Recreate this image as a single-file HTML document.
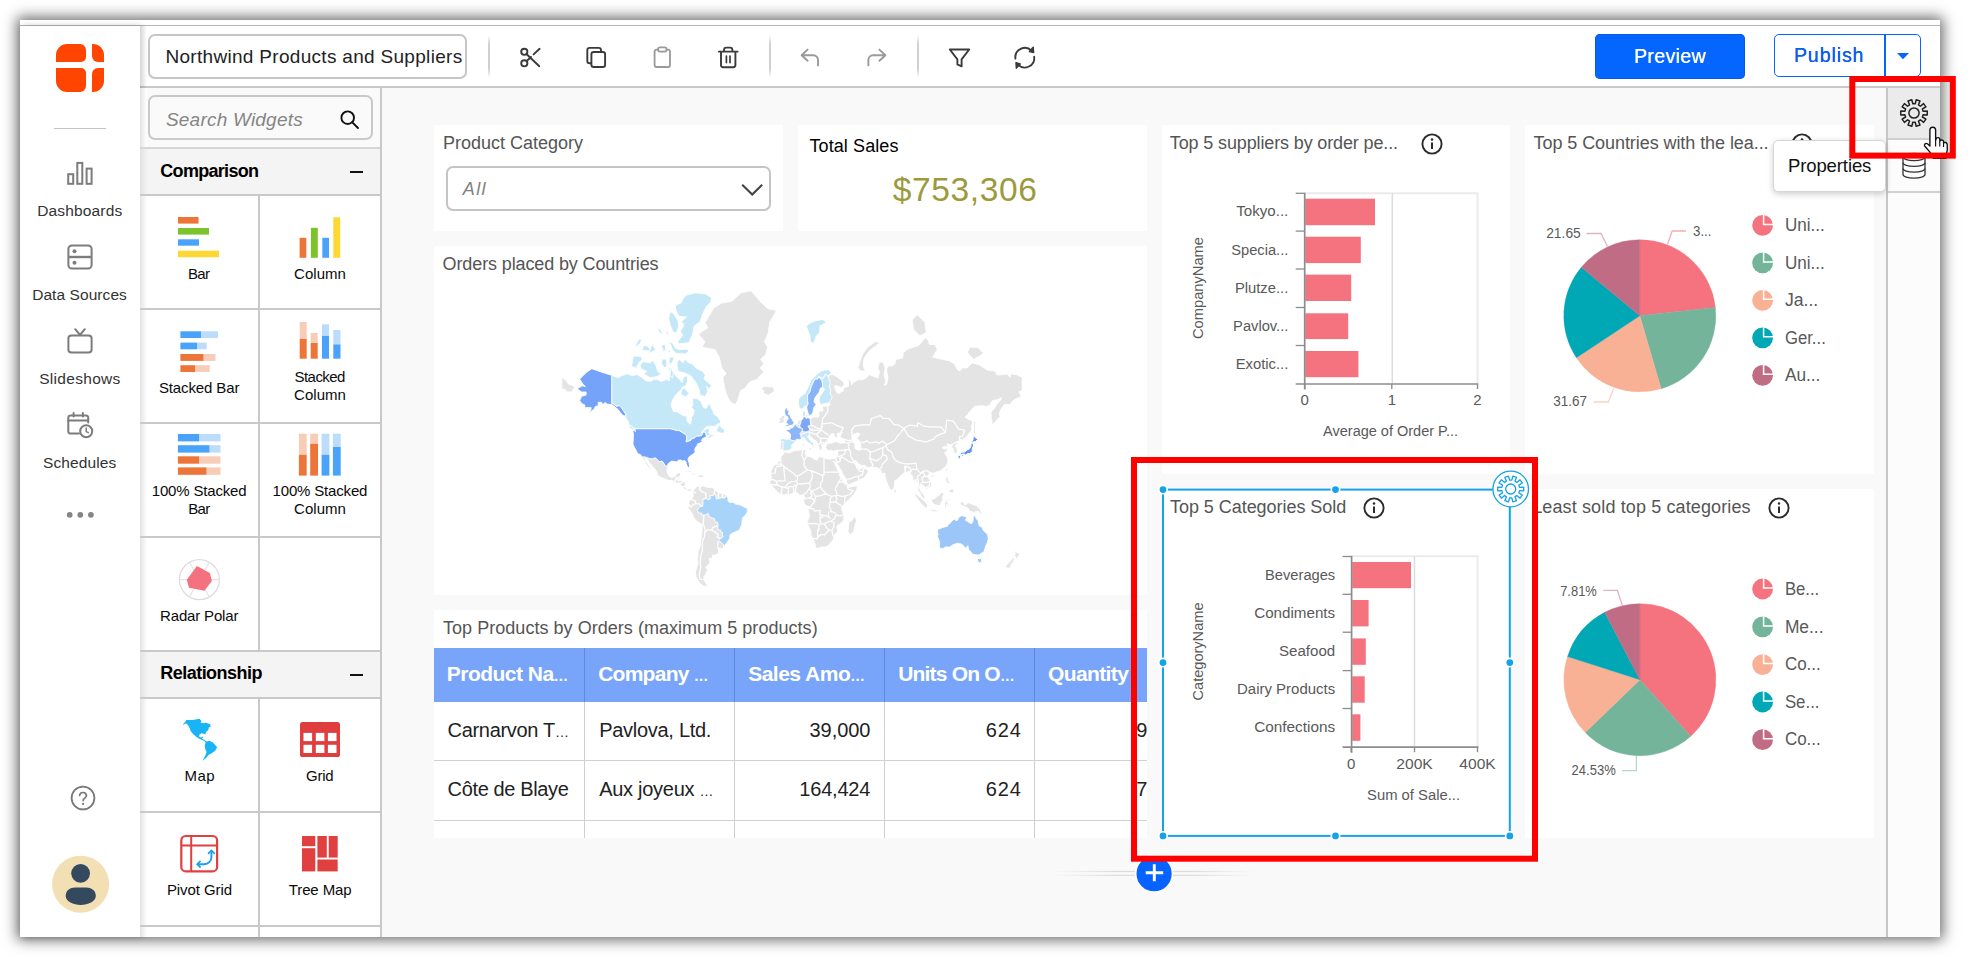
<!DOCTYPE html>
<html lang="en"><head><meta charset="utf-8"><title>Northwind Products and Suppliers - Dashboard Designer</title>
<style>
html,body{margin:0;padding:0;}
body{width:1970px;height:957px;overflow:hidden;background:#fff;position:relative;font-family:"Liberation Sans",Arial,sans-serif;}
.a{position:absolute;}
.t{position:absolute;white-space:nowrap;}
#win{left:20px;top:20px;width:1920px;height:917px;background:#f9f9f9;box-shadow:0 0 13px 3px rgba(0,0,0,.58);}
.w{background:#fff;}
.line{background:#c9c9c9;}
svg{position:absolute;overflow:visible;}
</style></head><body>
<!-- chrome -->
<div class="a" id="win"></div>
<div class="a" style="left:20px;top:20px;width:1920px;height:5px;background:#fff"></div>
<div class="a" style="left:20px;top:25px;width:1920px;height:1px;background:#b5b5b5"></div>
<div class="a" id="sidebar" style="left:20px;top:26px;width:120px;height:911px;background:#fff;box-shadow:2px 0 6px rgba(0,0,0,.22)"></div>
<div class="a" id="toolbar" style="left:140px;top:26px;width:1800px;height:60px;background:#fff"></div>
<div class="a line" style="left:140px;top:86px;width:1800px;height:2px;background:#c9c9c9"></div>
<div class="a" style="left:140px;top:26px;width:7px;height:911px;background:linear-gradient(90deg,rgba(0,0,0,.16),rgba(0,0,0,0))"></div>
<svg style="left:56px;top:44px" width="48" height="48" viewBox="0 0 48 48"><g fill="#ff4500"><path d="M11 0H24A6 6 0 0 1 30 6V13A5 5 0 0 1 25 18H0V11A11 11 0 0 1 11 0Z"/><path d="M36 0H37A11 11 0 0 1 48 11V18H42A6 6 0 0 1 36 12Z"/><path d="M0 24H25A5 5 0 0 1 30 29V42A6 6 0 0 1 24 48H11A11 11 0 0 1 0 37Z"/><path d="M42 24H48V37A11 11 0 0 1 37 48H36V30A6 6 0 0 1 42 24Z"/></g></svg>
<div class="a" style="left:54px;top:128px;width:52px;height:1px;background:#c4c4c4"></div>
<svg style="left:67px;top:162px" width="26" height="23" viewBox="0 0 26 23" fill="none" stroke="#7c7c7c" stroke-width="2"><rect x="1.2" y="12.2" width="5" height="9.6"/><rect x="10.3" y="0.9" width="5" height="20.9"/><rect x="19.6" y="6.6" width="5" height="15.2"/></svg>
<span class="t" style="font-size:15.5px;line-height:17px;top:202px;color:#333;letter-spacing:0.146px;left:37.25px;">Dashboards</span>
<svg style="left:67px;top:244px" width="26" height="26" viewBox="0 0 26 26" fill="none" stroke="#7c7c7c" stroke-width="2"><rect x="1.4" y="1.4" width="23.2" height="23.2" rx="3.5"/><path d="M1.4 13H24.6" stroke-width="2.4"/><circle cx="7.5" cy="7.2" r="2" fill="#7c7c7c" stroke="none"/><circle cx="7.5" cy="18.8" r="2" fill="#7c7c7c" stroke="none"/></svg>
<span class="t" style="font-size:15.5px;line-height:17px;top:286px;color:#333;letter-spacing:0.070px;left:32.15px;">Data Sources</span>
<svg style="left:67px;top:328px" width="26" height="26" viewBox="0 0 26 26" fill="none" stroke="#7c7c7c" stroke-width="2" stroke-linecap="round"><rect x="1.4" y="7.4" width="23.2" height="17.2" rx="3"/><path d="M8.2 1.2L13 7L17.8 1.2"/></svg>
<span class="t" style="font-size:15.5px;line-height:17px;top:370px;color:#333;letter-spacing:0.310px;left:39.15px;">Slideshows</span>
<svg style="left:67px;top:412px" width="27" height="27" viewBox="0 0 27 27" fill="none" stroke="#7c7c7c" stroke-width="2" stroke-linecap="round"><path d="M12 21.6H3.5A2.2 2.2 0 0 1 1.3 19.4V5.6A2.2 2.2 0 0 1 3.5 3.4H19A2.2 2.2 0 0 1 21.2 5.6V10.5"/><path d="M1.3 8.6H21.2M6.6 0.9V4.6M15.9 0.9V4.6"/><circle cx="19.2" cy="19.2" r="6"/><path d="M19.2 16V19.6L21.3 20.6" stroke-width="1.5"/></svg>
<span class="t" style="font-size:15.5px;line-height:17px;top:454px;color:#333;letter-spacing:0.126px;left:42.95px;">Schedules</span>
<svg style="left:66px;top:511px" width="30" height="8"><g fill="#858585"><circle cx="3.7" cy="3.8" r="2.9"/><circle cx="14.3" cy="3.8" r="2.9"/><circle cx="24.9" cy="3.8" r="2.9"/></g></svg>
<svg style="left:70px;top:785px" width="26" height="26" viewBox="0 0 26 26" fill="none" stroke="#787878" stroke-width="1.8" stroke-linecap="round"><circle cx="13" cy="13" r="11.4"/><path d="M9.6 10.3A3.5 3.5 0 0 1 16.5 10.6C16.5 13 13.1 13.2 13.1 15.6" stroke-width="1.7"/><circle cx="13.1" cy="18.9" r="1.1" fill="#787878" stroke="none"/></svg>
<svg style="left:52px;top:855px" width="58" height="58" viewBox="0 0 58 58"><circle cx="28.6" cy="29.2" r="28.5" fill="#f2dfb4"/><circle cx="28.6" cy="18.3" r="9.4" fill="#34495e"/><path d="M13.7 41C13.7 35.5 18 32.6 23 32.6H34.2C39.2 32.6 43.8 35.5 43.8 41C43.8 46.5 36 49.9 28.7 49.9C21.4 49.9 13.7 46.5 13.7 41Z" fill="#34495e"/></svg>
<div class="a" style="left:148px;top:34px;width:315px;height:41px;border:2px solid #c6c6c6;border-radius:7px;background:#fff;box-sizing:content-box"></div>
<span class="t" style="font-size:19px;line-height:21px;top:46px;color:#222;letter-spacing:0.305px;left:165.46px;">Northwind Products and Suppliers</span>
<div class="a" style="left:488px;top:35px;width:2px;height:43px;background:linear-gradient(180deg,rgba(200,200,200,0),rgba(200,200,200,.85) 22%,rgba(200,200,200,.85) 78%,rgba(200,200,200,0))"></div>
<div class="a" style="left:769px;top:35px;width:2px;height:43px;background:linear-gradient(180deg,rgba(200,200,200,0),rgba(200,200,200,.85) 22%,rgba(200,200,200,.85) 78%,rgba(200,200,200,0))"></div>
<div class="a" style="left:917px;top:35px;width:2px;height:43px;background:linear-gradient(180deg,rgba(200,200,200,0),rgba(200,200,200,.85) 22%,rgba(200,200,200,.85) 78%,rgba(200,200,200,0))"></div>
<div class="a" style="left:1595px;top:34px;width:150px;height:45px;background:#0565ff;border-radius:5px;box-shadow:0 0 0 .5px #0450cc inset"></div>
<span class="t" style="font-size:19.5px;line-height:22px;top:45px;color:#fff;letter-spacing:0.399px;left:1633.93px;text-shadow:0 0 .6px #fff;">Preview</span>
<div class="a" style="left:1774px;top:34px;width:145px;height:41px;border:1.5px solid #0565ff;border-radius:5px;background:#fff;box-sizing:content-box"></div>
<div class="a" style="left:1884px;top:35px;width:1.5px;height:42px;background:#0565ff"></div>
<span class="t" style="font-size:19.5px;line-height:22px;top:44px;color:#0b5cf0;letter-spacing:0.931px;left:1793.93px;text-shadow:0 0 .5px #0b5cf0;">Publish</span>
<svg style="left:1896px;top:52px" width="14" height="8"><path d="M1 1H13L7 7.2Z" fill="#0565ff"/></svg>
<!-- panel -->
<div class="a" id="wpanel" style="left:147px;top:88px;width:234px;height:849px;background:#fff"></div>
<div class="a" style="left:147px;top:88px;width:234px;height:60px;background:#fafafa"></div>
<div class="a" style="left:140px;top:88px;width:7px;height:849px;background:linear-gradient(90deg,#e4e4e4,#fff)"></div>
<div class="a line" style="left:380px;top:88px;width:2px;height:849px"></div>
<div class="a" style="left:148px;top:95px;width:221px;height:41px;border:2px solid #c9c9c9;border-radius:7px;background:#fafafa;box-sizing:content-box"></div>
<span class="t" style="font-size:19px;line-height:21px;top:109px;color:#858585;font-style:italic;letter-spacing:0.212px;left:165.96px;">Search Widgets</span>
<svg style="left:340px;top:110px" width="20" height="20" viewBox="0 0 20 20" fill="none" stroke="#111" stroke-width="1.9" stroke-linecap="round"><circle cx="7.7" cy="7.7" r="6.3"/><path d="M12.3 12.3L18 18"/></svg>
<div class="a" style="left:140px;top:148px;width:240px;height:46px;background:linear-gradient(90deg,#e2e2e2,#f4f4f4 8px)"></div>
<div class="a line" style="left:140px;top:147px;width:240px;height:1.5px;background:#d6d6d6"></div>
<span class="t" style="font-size:18px;line-height:20px;top:161px;color:#000;font-weight:700;letter-spacing:-0.700px;left:160.31px;">Comparison</span>
<div class="a" style="left:350px;top:171.3px;width:13px;height:2px;background:#111"></div>
<div class="a" style="left:140px;top:651px;width:240px;height:46px;background:linear-gradient(90deg,#e2e2e2,#f4f4f4 8px)"></div>
<div class="a line" style="left:140px;top:650px;width:240px;height:1.5px;background:#d6d6d6"></div>
<span class="t" style="font-size:18px;line-height:20px;top:663px;color:#000;font-weight:700;letter-spacing:-0.536px;left:160.31px;">Relationship</span>
<div class="a" style="left:350px;top:674.3px;width:13px;height:2px;background:#111"></div>
<div class="a line" style="left:140px;top:194px;width:241px;height:2px"></div>
<div class="a line" style="left:140px;top:308px;width:241px;height:2px"></div>
<div class="a line" style="left:140px;top:422px;width:241px;height:2px"></div>
<div class="a line" style="left:140px;top:536px;width:241px;height:2px"></div>
<div class="a line" style="left:140px;top:650px;width:241px;height:2px"></div>
<div class="a line" style="left:140px;top:697px;width:241px;height:2px"></div>
<div class="a line" style="left:140px;top:811px;width:241px;height:2px"></div>
<div class="a line" style="left:140px;top:925px;width:241px;height:2px"></div>
<div class="a line" style="left:258px;top:194px;width:2px;height:457px"></div>
<div class="a line" style="left:258px;top:697px;width:2px;height:240px"></div>
<span class="t" style="font-size:15px;line-height:17px;top:265px;color:#0a0a0a;letter-spacing:-0.700px;left:188.03px;">Bar</span>
<span class="t" style="font-size:15px;line-height:17px;top:265px;color:#0a0a0a;letter-spacing:0.033px;left:294.07px;">Column</span>
<span class="t" style="font-size:15px;line-height:17px;top:379px;color:#0a0a0a;letter-spacing:-0.117px;left:158.92px;">Stacked Bar</span>
<span class="t" style="font-size:15px;line-height:17px;top:368px;color:#0a0a0a;letter-spacing:-0.542px;left:294.52px;">Stacked</span>
<span class="t" style="font-size:15px;line-height:17px;top:386px;color:#0a0a0a;letter-spacing:0.033px;left:294.07px;">Column</span>
<span class="t" style="font-size:15px;line-height:17px;top:482px;color:#0a0a0a;letter-spacing:-0.171px;left:151.77px;">100% Stacked</span>
<span class="t" style="font-size:15px;line-height:17px;top:500px;color:#0a0a0a;letter-spacing:-0.700px;left:188.23px;">Bar</span>
<span class="t" style="font-size:15px;line-height:17px;top:482px;color:#0a0a0a;letter-spacing:-0.171px;left:272.57px;">100% Stacked</span>
<span class="t" style="font-size:15px;line-height:17px;top:500px;color:#0a0a0a;letter-spacing:0.033px;left:294.07px;">Column</span>
<span class="t" style="font-size:15px;line-height:17px;top:607px;color:#0a0a0a;letter-spacing:-0.170px;left:160.12px;">Radar Polar</span>
<span class="t" style="font-size:15px;line-height:17px;top:767px;color:#0a0a0a;letter-spacing:0.381px;left:184.62px;">Map</span>
<span class="t" style="font-size:15px;line-height:17px;top:767px;color:#0a0a0a;letter-spacing:-0.231px;left:306.07px;">Grid</span>
<span class="t" style="font-size:15px;line-height:17px;top:881px;color:#0a0a0a;letter-spacing:-0.068px;left:166.88px;">Pivot Grid</span>
<span class="t" style="font-size:15px;line-height:17px;top:881px;color:#0a0a0a;letter-spacing:-0.127px;left:288.82px;">Tree Map</span>
<svg style="left:0;top:0" width="400" height="957">
<rect x="178.0" y="217.0" width="20.5" height="6.6" fill="#ee7538"/><rect x="178.0" y="228.0" width="31.0" height="6.6" fill="#7dc42c"/><rect x="178.0" y="239.3" width="21.0" height="6.4" fill="#4aa3fb"/><rect x="178.0" y="250.7" width="41.0" height="6.6" fill="#fdd835"/>
<rect x="299.6" y="237.8" width="6.7" height="20.0" fill="#ee7538"/><rect x="310.9" y="227.8" width="6.9" height="30.0" fill="#7dc42c"/><rect x="322.3" y="237.8" width="6.7" height="20.0" fill="#4aa3fb"/><rect x="333.3" y="217.3" width="6.9" height="40.5" fill="#fdd835"/>
<rect x="180.4" y="331.3" width="20.6" height="6.7" fill="#4aa3fb"/><rect x="201.0" y="331.3" width="17.0" height="6.7" fill="#bcdcfb"/><rect x="180.4" y="342.6" width="16.6" height="6.7" fill="#4aa3fb"/><rect x="197.0" y="342.6" width="9.7" height="6.7" fill="#bcdcfb"/><rect x="180.4" y="354.0" width="23.3" height="6.9" fill="#ee7538"/><rect x="203.7" y="354.0" width="11.8" height="6.9" fill="#f7cdb8"/><rect x="180.4" y="365.2" width="15.0" height="6.8" fill="#ee7538"/><rect x="195.4" y="365.2" width="14.3" height="6.8" fill="#f7cdb8"/>
<rect x="299.7" y="322.0" width="7.0" height="16.9" fill="#f7cdb8"/><rect x="299.7" y="338.9" width="7.0" height="19.8" fill="#ee7538"/><rect x="310.7" y="333.0" width="7.0" height="10.0" fill="#f7cdb8"/><rect x="310.7" y="343.0" width="7.0" height="15.7" fill="#ee7538"/><rect x="322.0" y="324.3" width="7.0" height="11.6" fill="#bcdcfb"/><rect x="322.0" y="335.9" width="7.0" height="22.8" fill="#4aa3fb"/><rect x="333.3" y="330.0" width="7.2" height="14.4" fill="#bcdcfb"/><rect x="333.3" y="344.4" width="7.2" height="14.3" fill="#4aa3fb"/>
<rect x="177.9" y="434.0" width="21.5" height="7.4" fill="#4aa3fb"/><rect x="199.4" y="434.0" width="21.1" height="7.4" fill="#bcdcfb"/><rect x="177.9" y="445.2" width="31.8" height="7.4" fill="#4aa3fb"/><rect x="209.7" y="445.2" width="10.8" height="7.4" fill="#bcdcfb"/><rect x="177.9" y="456.3" width="21.1" height="7.4" fill="#ee7538"/><rect x="199.0" y="456.3" width="21.5" height="7.4" fill="#f7cdb8"/><rect x="177.9" y="467.4" width="28.8" height="7.4" fill="#ee7538"/><rect x="206.7" y="467.4" width="13.8" height="7.4" fill="#f7cdb8"/>
<rect x="298.9" y="433.7" width="7.8" height="21.1" fill="#f7cdb8"/><rect x="298.9" y="454.8" width="7.8" height="20.8" fill="#ee7538"/><rect x="310.2" y="433.7" width="7.8" height="10.1" fill="#f7cdb8"/><rect x="310.2" y="443.8" width="7.8" height="31.8" fill="#ee7538"/><rect x="321.6" y="433.7" width="7.8" height="21.1" fill="#bcdcfb"/><rect x="321.6" y="454.8" width="7.8" height="20.8" fill="#4aa3fb"/><rect x="332.9" y="433.7" width="7.8" height="13.3" fill="#bcdcfb"/><rect x="332.9" y="447.0" width="7.8" height="28.6" fill="#4aa3fb"/>
<circle cx="199.4" cy="579.6" r="20.0" fill="#fff" stroke="#dcdcdc" stroke-width="1.2"/><path d="M179.4 579.6L219.4 579.6M189.4 562.3L209.4 596.9M209.4 562.3L189.4 596.9" stroke="#e2e2e2" stroke-width="1.1"/>
<path d="M196.9 565.9L209.9 573.1L211.9 581L204.4 590.7L189 587.7L186.8 579.8Z" fill="#f4717f"/>
<path fill="#18b4f5" d="M182.8 724.7L186.5 720.1L192.9 720.1L199.3 718.7L201.5 721.0L200.6 722.8L204.3 723.3L205.2 722.4L210.2 724.2L210.7 726.5L208.8 727.4L208.4 729.7L206.1 732.0L205.2 734.3L201.5 733.3L199.3 734.7L199.3 737.0L201.5 737.4L202.4 736.5L203.4 737.9L201.5 738.8L204.3 739.7L206.6 741.6L209.3 740.8L213.0 742.5L217.1 747.2L215.2 750.7L212.0 753.0L208.8 754.8L206.6 757.6L202.4 760.8L205.2 755.7L206.6 752.1L205.2 748.9L204.7 745.7L205.6 742.5L204.3 741.1L201.5 739.7L198.8 738.4L196.5 737.0L193.3 734.3L190.6 731.1L189.7 728.3L188.3 725.6L186.0 723.3L183.7 724.7Z"/>
<rect x="300" y="721.9" width="40" height="35.2" rx="2.6" fill="#e03e3e"/>
<rect x="303.5" y="732.9" width="8.6" height="8.2" fill="#fff"/><rect x="303.5" y="744.8" width="8.6" height="8.2" fill="#fff"/><rect x="315.8" y="732.9" width="8.6" height="8.2" fill="#fff"/><rect x="315.8" y="744.8" width="8.6" height="8.2" fill="#fff"/><rect x="327.9" y="732.9" width="8.6" height="8.2" fill="#fff"/><rect x="327.9" y="744.8" width="8.6" height="8.2" fill="#fff"/>
<rect x="181.3" y="836" width="35.8" height="35.4" rx="4.5" fill="#fff" stroke="#e0403f" stroke-width="2.2"/><path d="M191.2 836V871.4M181.3 845.6H217.1" stroke="#e0403f" stroke-width="2" fill="none"/><path d="M198 864.2H204.4A7 7 0 0 0 211.4 857.2V851.5" stroke="#1a9ff0" stroke-width="1.9" fill="none"/><path d="M200.6 860.8L197.2 864.2L200.6 867.6M208 853.8L211.4 850.4L214.8 853.8" stroke="#1a9ff0" stroke-width="1.7" fill="none"/>
<rect x="302.0" y="836.0" width="13.3" height="10.2" fill="#e04040"/><rect x="302.0" y="848.2" width="13.3" height="23.2" fill="#e04040"/><rect x="317.4" y="836.0" width="9.4" height="21.6" fill="#e04040"/><rect x="328.7" y="836.0" width="9.0" height="21.6" fill="#e04040"/><rect x="317.4" y="859.5" width="20.3" height="11.9" fill="#e04040"/>
</svg>
<!-- widgets -->
<div class="a w" id="w-filter" style="left:434px;top:125px;width:349px;height:106px"></div>
<div class="a w" id="w-kpi" style="left:798px;top:125px;width:349px;height:106px"></div>
<div class="a w" id="w-map" style="left:434px;top:246px;width:713px;height:349px"></div>
<div class="a w" id="w-grid" style="left:434px;top:610px;width:713px;height:228px"></div>
<div class="a w" id="w-suppliers" style="left:1162px;top:125px;width:348px;height:349px"></div>
<div class="a w" id="w-countries" style="left:1525px;top:125px;width:349px;height:349px"></div>
<div class="a w" id="w-categories" style="left:1162px;top:489px;width:348px;height:349px"></div>
<div class="a w" id="w-least" style="left:1525px;top:489px;width:349px;height:349px"></div>
<span class="t" style="font-size:18px;line-height:20px;top:133px;color:#555;letter-spacing:0.009px;left:442.91px;">Product Category</span>
<div class="a" style="left:446px;top:166px;width:321px;height:41px;border:2px solid #c4c4c4;border-radius:7px;background:#fff;box-sizing:content-box"></div>
<span class="t" style="font-size:18px;line-height:20px;top:179px;color:#808080;font-style:italic;letter-spacing:1.402px;left:462.81px;">All</span>
<svg style="left:740px;top:183px" width="24" height="14" viewBox="0 0 24 14"><path d="M2.2 1.8L12.2 11.6L22.2 1.8" fill="none" stroke="#444" stroke-width="2.1"/></svg>
<span class="t" style="font-size:18px;line-height:20px;top:136px;color:#000;letter-spacing:0.086px;left:809.51px;">Total Sales</span>
<span class="t" style="font-size:33.5px;line-height:37px;top:171px;color:#9c9a3c;letter-spacing:0.612px;left:892.86px;">$753,306</span>
<span class="t" style="font-size:18px;line-height:20px;top:254px;color:#555;letter-spacing:-0.124px;left:442.61px;">Orders placed by Countries</span>
<span class="t" style="font-size:18px;line-height:20px;top:618px;color:#555;letter-spacing:0.036px;left:443.01px;">Top Products by Orders (maximum 5 products)</span>
<div class="a" style="left:434px;top:648px;width:713px;height:54px;background:#78a5fa"></div>
<div class="a" style="left:584px;top:648px;width:1px;height:54px;background:#6088dc"></div>
<div class="a" style="left:584px;top:702px;width:1px;height:136px;background:#cfcfcf"></div>
<div class="a" style="left:734px;top:648px;width:1px;height:54px;background:#6088dc"></div>
<div class="a" style="left:734px;top:702px;width:1px;height:136px;background:#cfcfcf"></div>
<div class="a" style="left:884px;top:648px;width:1px;height:54px;background:#6088dc"></div>
<div class="a" style="left:884px;top:702px;width:1px;height:136px;background:#cfcfcf"></div>
<div class="a" style="left:1034px;top:648px;width:1px;height:54px;background:#6088dc"></div>
<div class="a" style="left:1034px;top:702px;width:1px;height:136px;background:#cfcfcf"></div>
<div class="a" style="left:434px;top:760px;width:713px;height:1px;background:#d2d2d2"></div>
<div class="a" style="left:434px;top:820px;width:713px;height:1px;background:#d2d2d2"></div>
<span class="t" style="font-size:21px;line-height:23px;top:662px;color:#fff;font-weight:700;letter-spacing:-0.521px;left:446.75px;">Product Na<span style="font-size:.7em">…</span></span>
<span class="t" style="font-size:21px;line-height:23px;top:662px;color:#fff;font-weight:700;letter-spacing:-0.727px;left:598.14px;">Company <span style="font-size:.7em">…</span></span>
<span class="t" style="font-size:21px;line-height:23px;top:662px;color:#fff;font-weight:700;letter-spacing:-0.490px;left:748.14px;">Sales Amo<span style="font-size:.7em">…</span></span>
<span class="t" style="font-size:21px;line-height:23px;top:662px;color:#fff;font-weight:700;letter-spacing:-0.787px;left:898.14px;">Units On O<span style="font-size:.7em">…</span></span>
<span class="t" style="font-size:21px;line-height:23px;top:662px;color:#fff;font-weight:700;letter-spacing:-0.626px;left:1048.05px;">Quantity</span>
<span class="t" style="font-size:20px;line-height:22px;top:719px;color:#222;letter-spacing:-0.318px;left:447.60px;">Carnarvon T<span style="font-size:.7em">…</span></span>
<span class="t" style="font-size:20px;line-height:22px;top:719px;color:#222;letter-spacing:-0.285px;left:599.20px;">Pavlova, Ltd.</span>
<span class="t" style="font-size:20px;line-height:22px;top:719px;color:#222;letter-spacing:-0.054px;left:809.50px;">39,000</span>
<span class="t" style="font-size:20px;line-height:22px;top:719px;color:#222;letter-spacing:0.912px;left:985.80px;">624</span>
<span class="t" style="font-size:20px;line-height:22px;top:719px;color:#222;left:1136.27px;">9</span>
<span class="t" style="font-size:20px;line-height:22px;top:778px;color:#222;letter-spacing:-0.362px;left:447.60px;">Côte de Blaye</span>
<span class="t" style="font-size:20px;line-height:22px;top:778px;color:#222;letter-spacing:-0.281px;left:599.20px;">Aux joyeux <span style="font-size:.7em">…</span></span>
<span class="t" style="font-size:20px;line-height:22px;top:778px;color:#222;letter-spacing:-0.199px;left:799.30px;">164,424</span>
<span class="t" style="font-size:20px;line-height:22px;top:778px;color:#222;letter-spacing:0.912px;left:985.80px;">624</span>
<span class="t" style="font-size:20px;line-height:22px;top:778px;color:#222;left:1136.27px;">7</span>
<span class="t" style="font-size:18px;line-height:20px;top:133px;color:#555;letter-spacing:-0.132px;left:1169.81px;">Top 5 suppliers by order pe...</span>
<svg style="left:1419.5px;top:131.7px" width="24" height="24" viewBox="0 0 24 24"><circle cx="12" cy="12" r="9.6" fill="none" stroke="#2b2b2b" stroke-width="1.9"/><path d="M12 10.6V17" stroke="#2b2b2b" stroke-width="2" fill="none"/><circle cx="12" cy="7.4" r="1.25" fill="#2b2b2b"/></svg>
<span class="t" style="font-size:18px;line-height:20px;top:133px;color:#555;letter-spacing:-0.067px;left:1533.51px;">Top 5 Countries with the lea...</span>
<svg style="left:1790.0px;top:131.7px" width="24" height="24" viewBox="0 0 24 24"><circle cx="12" cy="12" r="9.6" fill="none" stroke="#2b2b2b" stroke-width="1.9"/><path d="M12 10.6V17" stroke="#2b2b2b" stroke-width="2" fill="none"/><circle cx="12" cy="7.4" r="1.25" fill="#2b2b2b"/></svg>
<span class="t" style="font-size:18px;line-height:20px;top:497px;color:#555;letter-spacing:-0.044px;left:1170.01px;">Top 5 Categories Sold</span>
<svg style="left:1362.0px;top:495.7px" width="24" height="24" viewBox="0 0 24 24"><circle cx="12" cy="12" r="9.6" fill="none" stroke="#2b2b2b" stroke-width="1.9"/><path d="M12 10.6V17" stroke="#2b2b2b" stroke-width="2" fill="none"/><circle cx="12" cy="7.4" r="1.25" fill="#2b2b2b"/></svg>
<span class="t" style="font-size:18px;line-height:20px;top:497px;color:#555;letter-spacing:0.126px;left:1532.21px;">Least sold top 5 categories</span>
<svg style="left:1766.5px;top:495.7px" width="24" height="24" viewBox="0 0 24 24"><circle cx="12" cy="12" r="9.6" fill="none" stroke="#2b2b2b" stroke-width="1.9"/><path d="M12 10.6V17" stroke="#2b2b2b" stroke-width="2" fill="none"/><circle cx="12" cy="7.4" r="1.25" fill="#2b2b2b"/></svg>
<!-- charts -->
<svg style="left:0;top:0" width="1970" height="957" font-family="Liberation Sans, Arial, sans-serif">
<path d="M1304.7 193.3H1477.5V384.0" fill="none" stroke="#ebebeb" stroke-width="2"/><path d="M1392.3 193.3V384.0" stroke="#dcdcdc" stroke-width="1.5"/><rect x="1305.3" y="198.7" width="69.7" height="26.5" fill="#f5727f"/><rect x="1305.3" y="236.7" width="55.5" height="26.4" fill="#f5727f"/><rect x="1305.3" y="274.6" width="45.9" height="26.4" fill="#f5727f"/><rect x="1305.3" y="313.3" width="42.9" height="25.8" fill="#f5727f"/><rect x="1305.3" y="351.0" width="53.1" height="26.2" fill="#f5727f"/><path d="M1304.7 192.8V389.5" stroke="#8c8c8c" stroke-width="1.7"/><path d="M1295.7 384.0H1478.3" stroke="#8c8c8c" stroke-width="1.7"/><path d="M1295.7 193.3H1304.7" stroke="#8c8c8c" stroke-width="1.3"/><path d="M1295.7 231.1H1304.7" stroke="#8c8c8c" stroke-width="1.3"/><path d="M1295.7 269.0H1304.7" stroke="#8c8c8c" stroke-width="1.3"/><path d="M1295.7 307.5H1304.7" stroke="#8c8c8c" stroke-width="1.3"/><path d="M1295.7 345.5H1304.7" stroke="#8c8c8c" stroke-width="1.3"/><path d="M1304.7 384.0V389.0" stroke="#8c8c8c" stroke-width="1.4"/><text x="1304.7" y="405" font-size="15" text-anchor="middle" fill="#595959">0</text><path d="M1391.8 384.0V389.0" stroke="#8c8c8c" stroke-width="1.4"/><text x="1391.8" y="405" font-size="15" text-anchor="middle" fill="#595959">1</text><path d="M1477.5 384.0V389.0" stroke="#8c8c8c" stroke-width="1.4"/><text x="1477.5" y="405" font-size="15" text-anchor="middle" fill="#595959">2</text><text x="1288.3" y="216" font-size="15.5" text-anchor="end" fill="#595959" textLength="52.0" lengthAdjust="spacingAndGlyphs">Tokyo...</text><text x="1288.3" y="255" font-size="15.5" text-anchor="end" fill="#595959" textLength="57.1" lengthAdjust="spacingAndGlyphs">Specia...</text><text x="1288.3" y="293" font-size="15.5" text-anchor="end" fill="#595959" textLength="53.4" lengthAdjust="spacingAndGlyphs">Plutze...</text><text x="1288.3" y="331" font-size="15.5" text-anchor="end" fill="#595959" textLength="55.2" lengthAdjust="spacingAndGlyphs">Pavlov...</text><text x="1288.3" y="369" font-size="15.5" text-anchor="end" fill="#595959" textLength="52.6" lengthAdjust="spacingAndGlyphs">Exotic...</text><text x="1323.1" y="436" font-size="15.5" text-anchor="start" fill="#595959" textLength="134.9" lengthAdjust="spacingAndGlyphs">Average of Order P...</text><text transform="translate(1203.4 288.0) rotate(-90)" font-size="15.5" text-anchor="middle" fill="#595959" textLength="102.0" lengthAdjust="spacingAndGlyphs">CompanyName</text>
<path d="M1351.6 556.3H1477.6V747.2" fill="none" stroke="#ebebeb" stroke-width="2"/><path d="M1414.5 556.3V747.2" stroke="#dcdcdc" stroke-width="1.5"/><rect x="1352.2" y="562.0" width="58.8" height="26.2" fill="#f5727f"/><rect x="1352.2" y="600.0" width="16.4" height="26.4" fill="#f5727f"/><rect x="1352.2" y="638.4" width="13.6" height="26.4" fill="#f5727f"/><rect x="1352.2" y="676.3" width="12.5" height="26.4" fill="#f5727f"/><rect x="1352.2" y="714.3" width="8.2" height="26.5" fill="#f5727f"/><path d="M1351.6 555.8V752.7" stroke="#8c8c8c" stroke-width="1.7"/><path d="M1342.6 747.2H1478.4" stroke="#8c8c8c" stroke-width="1.7"/><path d="M1342.6 556.5H1351.6" stroke="#8c8c8c" stroke-width="1.3"/><path d="M1342.6 594.3H1351.6" stroke="#8c8c8c" stroke-width="1.3"/><path d="M1342.6 632.2H1351.6" stroke="#8c8c8c" stroke-width="1.3"/><path d="M1342.6 670.6H1351.6" stroke="#8c8c8c" stroke-width="1.3"/><path d="M1342.6 708.5H1351.6" stroke="#8c8c8c" stroke-width="1.3"/><path d="M1351.2 747.2V752.2" stroke="#8c8c8c" stroke-width="1.4"/><text x="1351.2" y="769" font-size="15" text-anchor="middle" fill="#595959">0</text><path d="M1414.5 747.2V752.2" stroke="#8c8c8c" stroke-width="1.4"/><text x="1414.5" y="769" font-size="15" text-anchor="middle" fill="#595959" textLength="36.4" lengthAdjust="spacingAndGlyphs">200K</text><path d="M1477.5 747.2V752.2" stroke="#8c8c8c" stroke-width="1.4"/><text x="1477.5" y="769" font-size="15" text-anchor="middle" fill="#595959" textLength="36.4" lengthAdjust="spacingAndGlyphs">400K</text><text x="1335.2" y="580" font-size="15.5" text-anchor="end" fill="#595959" textLength="70.1" lengthAdjust="spacingAndGlyphs">Beverages</text><text x="1335.2" y="618" font-size="15.5" text-anchor="end" fill="#595959" textLength="81.0" lengthAdjust="spacingAndGlyphs">Condiments</text><text x="1335.2" y="656" font-size="15.5" text-anchor="end" fill="#595959" textLength="56.2" lengthAdjust="spacingAndGlyphs">Seafood</text><text x="1335.2" y="694" font-size="15.5" text-anchor="end" fill="#595959" textLength="98.2" lengthAdjust="spacingAndGlyphs">Dairy Products</text><text x="1335.2" y="732" font-size="15.5" text-anchor="end" fill="#595959" textLength="81.0" lengthAdjust="spacingAndGlyphs">Confections</text><text x="1367.1" y="800" font-size="15.5" text-anchor="start" fill="#595959" textLength="92.9" lengthAdjust="spacingAndGlyphs">Sum of Sale...</text><text transform="translate(1203.4 651.5) rotate(-90)" font-size="15.5" text-anchor="middle" fill="#595959" textLength="98.0" lengthAdjust="spacingAndGlyphs">CategoryName</text>
<path d="M1639.80 315.80L1639.80 239.80A76.0 76.0 0 0 1 1715.36 307.59Z" fill="#f5727f" stroke="#f5727f" stroke-width=".4"/><path d="M1639.80 315.80L1715.36 307.59A76.0 76.0 0 0 1 1661.13 388.75Z" fill="#74b49b" stroke="#74b49b" stroke-width=".4"/><path d="M1639.80 315.80L1661.13 388.75A76.0 76.0 0 0 1 1576.42 357.75Z" fill="#f8b195" stroke="#f8b195" stroke-width=".4"/><path d="M1639.80 315.80L1576.42 357.75A76.0 76.0 0 0 1 1581.33 267.25Z" fill="#00a8b5" stroke="#00a8b5" stroke-width=".4"/><path d="M1639.80 315.80L1581.33 267.25A76.0 76.0 0 0 1 1639.80 239.80Z" fill="#c06c84" stroke="#c06c84" stroke-width=".4"/>
<circle cx="1762.6" cy="225.4" r="10.4" fill="#f5727f"/><path d="M1763.6 215.0V224.4H1773.0" fill="none" stroke="#fff" stroke-width="1.5"/><text x="1784.9" y="231" font-size="17.5" text-anchor="start" fill="#595959" textLength="39.9" lengthAdjust="spacingAndGlyphs">Uni...</text><circle cx="1762.6" cy="262.9" r="10.4" fill="#74b49b"/><path d="M1763.6 252.5V261.9H1773.0" fill="none" stroke="#fff" stroke-width="1.5"/><text x="1784.9" y="269" font-size="17.5" text-anchor="start" fill="#595959" textLength="39.9" lengthAdjust="spacingAndGlyphs">Uni...</text><circle cx="1762.6" cy="300.3" r="10.4" fill="#f8b195"/><path d="M1763.6 289.9V299.3H1773.0" fill="none" stroke="#fff" stroke-width="1.5"/><text x="1784.9" y="306" font-size="17.5" text-anchor="start" fill="#595959" textLength="33.3" lengthAdjust="spacingAndGlyphs">Ja...</text><circle cx="1762.6" cy="337.8" r="10.4" fill="#00a8b5"/><path d="M1763.6 327.4V336.8H1773.0" fill="none" stroke="#fff" stroke-width="1.5"/><text x="1784.9" y="344" font-size="17.5" text-anchor="start" fill="#595959" textLength="40.9" lengthAdjust="spacingAndGlyphs">Ger...</text><circle cx="1762.6" cy="375.3" r="10.4" fill="#c06c84"/><path d="M1763.6 364.9V374.3H1773.0" fill="none" stroke="#fff" stroke-width="1.5"/><text x="1784.9" y="381" font-size="17.5" text-anchor="start" fill="#595959" textLength="35.5" lengthAdjust="spacingAndGlyphs">Au...</text>
<path d="M1586.5 233.5H1601L1607.5 246.5" fill="none" stroke="#dfb2c0" stroke-width="1.3"/>
<text x="1546.2" y="238" font-size="14" text-anchor="start" fill="#595959" textLength="34.6" lengthAdjust="spacingAndGlyphs">21.65</text>
<path d="M1667.5 244.4L1672.2 231H1686" fill="none" stroke="#f9a9b1" stroke-width="1.3"/>
<text x="1693.0" y="236" font-size="14" text-anchor="start" fill="#595959" textLength="18.5" lengthAdjust="spacingAndGlyphs">3...</text>
<path d="M1593.3 402H1608.3L1613.7 388.6" fill="none" stroke="#fbd3c2" stroke-width="1.3"/>
<text x="1553.2" y="406" font-size="14" text-anchor="start" fill="#595959" textLength="33.8" lengthAdjust="spacingAndGlyphs">31.67</text>
<path d="M1639.90 679.70L1639.90 603.70A76.0 76.0 0 0 1 1690.75 736.18Z" fill="#f5727f" stroke="#f5727f" stroke-width=".4"/><path d="M1639.90 679.70L1690.75 736.18A76.0 76.0 0 0 1 1585.23 732.49Z" fill="#74b49b" stroke="#74b49b" stroke-width=".4"/><path d="M1639.90 679.70L1585.23 732.49A76.0 76.0 0 0 1 1567.50 656.59Z" fill="#f8b195" stroke="#f8b195" stroke-width=".4"/><path d="M1639.90 679.70L1567.50 656.59A76.0 76.0 0 0 1 1604.69 612.35Z" fill="#00a8b5" stroke="#00a8b5" stroke-width=".4"/><path d="M1639.90 679.70L1604.69 612.35A76.0 76.0 0 0 1 1639.90 603.70Z" fill="#c06c84" stroke="#c06c84" stroke-width=".4"/>
<circle cx="1762.6" cy="589.0" r="10.4" fill="#f5727f"/><path d="M1763.6 578.6V588.0H1773.0" fill="none" stroke="#fff" stroke-width="1.5"/><text x="1784.9" y="595" font-size="17.5" text-anchor="start" fill="#595959" textLength="34.3" lengthAdjust="spacingAndGlyphs">Be...</text><circle cx="1762.6" cy="626.9" r="10.4" fill="#74b49b"/><path d="M1763.6 616.5V625.9H1773.0" fill="none" stroke="#fff" stroke-width="1.5"/><text x="1784.9" y="633" font-size="17.5" text-anchor="start" fill="#595959" textLength="38.6" lengthAdjust="spacingAndGlyphs">Me...</text><circle cx="1762.6" cy="664.6" r="10.4" fill="#f8b195"/><path d="M1763.6 654.2V663.6H1773.0" fill="none" stroke="#fff" stroke-width="1.5"/><text x="1784.9" y="670" font-size="17.5" text-anchor="start" fill="#595959" textLength="35.9" lengthAdjust="spacingAndGlyphs">Co...</text><circle cx="1762.6" cy="702.0" r="10.4" fill="#00a8b5"/><path d="M1763.6 691.6V701.0H1773.0" fill="none" stroke="#fff" stroke-width="1.5"/><text x="1784.9" y="708" font-size="17.5" text-anchor="start" fill="#595959" textLength="34.6" lengthAdjust="spacingAndGlyphs">Se...</text><circle cx="1762.6" cy="739.7" r="10.4" fill="#c06c84"/><path d="M1763.6 729.3V738.7H1773.0" fill="none" stroke="#fff" stroke-width="1.5"/><text x="1784.9" y="745" font-size="17.5" text-anchor="start" fill="#595959" textLength="35.9" lengthAdjust="spacingAndGlyphs">Co...</text>
<path d="M1603.4 590.3H1617.3L1622.5 606" fill="none" stroke="#dfb2c0" stroke-width="1.3"/>
<text x="1560.2" y="596" font-size="14" text-anchor="start" fill="#595959" textLength="36.6" lengthAdjust="spacingAndGlyphs">7.81%</text>
<path d="M1622 770.6H1636.4V756" fill="none" stroke="#b5d8ca" stroke-width="1.3"/>
<text x="1571.6" y="775" font-size="14" text-anchor="start" fill="#595959" textLength="44.2" lengthAdjust="spacingAndGlyphs">24.53%</text>
</svg>
<!-- worldmap -->
<svg style="left:0;top:0" width="1970" height="957">
<g stroke="#fff" stroke-width=".9" stroke-linejoin="round">
<path fill="#e4e4e4" d="M698.6 334.6L705.0 341.7L701.8 347.2L707.6 348.3L715.3 349.8L719.1 357.1L721.7 367.9L726.1 373.7L722.9 377.4L724.2 385.8L726.1 393.5L728.7 399.1L730.6 402.3L735.7 404.6L737.6 400.5L738.9 396.3L740.8 390.5L744.7 388.4L749.8 381.9L757.5 379.1L761.9 373.7L763.9 371.8L760.0 367.9L763.9 363.8L760.7 359.4L765.8 354.7L767.7 347.2L764.5 341.7L768.3 332.7L769.6 322.4L776.7 310.4L767.7 308.7L760.0 301.2L751.1 290.7L740.8 292.9L731.9 301.2L721.7 303.1L714.0 307.8L708.9 316.2L705.0 322.4L707.6 328.0L701.2 332.0ZM642.2 456.9L645.2 456.9L650.0 458.7L653.6 458.7L653.6 458.0L655.8 458.0L658.0 460.4L660.0 462.1L660.9 460.9L663.1 462.1L665.1 465.6L667.6 466.4L666.9 471.4L667.9 474.1L669.2 476.1L671.1 477.2L674.3 476.7L675.9 475.5L676.4 473.4L679.4 472.7L681.0 473.0L680.1 475.5L679.4 478.2L678.4 480.3L682.0 480.4L685.2 481.2L685.2 484.8L684.8 487.0L686.5 489.0L688.4 489.6L690.3 488.7L692.9 489.9L692.5 491.5L691.6 490.2L689.7 491.5L687.8 490.9L685.8 490.2L683.3 488.3L682.3 486.7L680.1 484.1L676.9 483.1L674.1 482.2L671.8 480.0L668.6 480.6L665.4 479.2L661.5 477.5L657.7 475.5L657.1 472.7L655.1 469.3L652.2 465.7L648.8 462.1L647.5 458.9L645.3 458.1L645.6 460.6L647.9 463.6L650.0 467.2L651.6 470.7L650.7 470.0L648.5 467.2L645.9 463.9L644.9 461.4L643.6 459.5ZM683.3 472.0L687.1 470.4L690.3 470.9L693.5 473.4L697.1 474.5L692.9 474.9L691.6 472.7L687.1 471.6L684.6 472.3ZM696.8 476.8L699.3 474.8L702.5 475.1L704.5 476.7L701.2 477.4L699.3 477.2ZM692.9 489.9L694.8 488.8L696.1 487.0L699.3 485.7L700.6 484.9L700.2 486.7L700.9 488.3L699.9 489.1L700.6 486.9L702.5 486.1L702.5 485.2L704.4 486.4L707.6 487.3L710.1 487.4L712.7 487.1L713.0 488.3L715.3 490.0L717.2 491.9L719.1 493.2L721.7 493.2L723.2 493.5L725.5 494.8L726.8 495.8L728.0 498.6L728.0 500.9L730.0 502.6L733.2 502.2L735.7 504.1L738.9 504.6L742.1 505.8L744.7 507.2L747.0 507.9L747.5 510.5L746.9 513.1L744.7 515.7L742.8 517.7L742.1 521.0L741.9 524.0L740.8 527.0L739.6 529.8L737.0 531.1L734.4 532.3L731.9 533.4L730.0 535.1L729.8 538.2L728.0 541.2L726.1 543.8L723.7 546.7L722.3 548.4L719.7 548.4L717.4 547.2L718.8 550.3L718.3 553.5L715.3 555.0L712.4 555.1L712.3 558.2L708.9 558.5L710.1 561.4L708.5 564.6L705.7 567.3L707.6 570.1L705.7 574.0L703.7 577.0L704.5 579.9L704.8 581.6L706.9 584.6L708.6 585.0L706.3 586.2L703.7 586.2L700.6 583.7L698.0 580.7L696.1 577.0L695.4 572.0L696.7 567.3L698.0 562.8L697.4 559.3L698.0 555.1L698.0 551.9L699.3 548.7L700.4 544.9L700.6 541.2L701.4 536.8L702.0 531.8L702.2 527.0L702.0 524.7L699.9 523.0L696.1 520.7L694.4 518.7L693.3 516.4L691.6 513.1L689.9 509.9L688.1 507.9L688.4 506.3L689.7 504.7L688.7 503.5L689.4 500.9L691.0 499.0L691.6 497.7L693.3 496.0L692.9 493.2L693.0 491.7ZM784.5 451.8L789.4 452.9L793.3 450.7L798.4 450.2L804.8 449.4L806.1 450.1L805.0 454.1L806.1 455.8L811.2 457.1L816.3 460.2L817.6 459.2L819.5 456.3L824.0 458.0L829.1 459.2L832.9 458.7L835.7 458.7L836.6 461.4L834.8 463.6L833.6 460.8L835.4 465.0L837.4 469.3L839.3 473.4L839.8 476.4L841.4 477.5L842.5 480.8L844.7 482.0L847.4 484.8L847.0 486.0L848.9 487.5L852.1 486.5L857.5 485.7L857.0 488.7L854.7 493.2L850.8 497.7L846.4 501.9L843.8 504.5L842.1 506.9L841.6 509.2L842.5 511.8L843.8 514.4L843.9 519.6L842.5 522.3L839.3 524.0L836.8 526.7L837.4 529.8L837.3 532.5L834.2 534.6L834.0 536.8L833.3 539.4L831.4 541.9L828.5 545.4L825.3 546.9L820.8 547.2L817.6 548.4L815.5 547.5L815.3 544.9L814.0 541.2L812.7 539.0L811.2 535.4L810.5 530.4L808.0 525.0L807.1 521.6L809.3 517.0L808.9 513.1L807.6 508.6L807.1 506.7L804.2 503.5L803.5 500.3L804.4 497.7L804.2 495.8L802.2 495.1L799.7 495.4L797.8 493.0L793.9 493.0L789.4 494.8L786.2 494.2L782.4 495.3L779.8 493.5L777.3 492.1L775.0 489.3L772.8 487.0L770.6 484.8L769.6 481.9L770.9 479.5L771.3 476.1L770.3 473.4L771.5 470.0L773.5 466.4L775.4 464.0L777.9 462.6L779.5 460.6L779.6 458.4L781.1 455.7L783.3 454.3ZM855.1 516.4L856.6 521.0L855.3 524.3L853.1 532.5L850.2 534.6L848.0 531.8L848.3 527.0L848.9 522.0L851.5 521.0L853.4 518.3ZM779.8 449.9L780.6 447.5L779.8 447.0L780.7 443.3L780.1 439.9L781.8 438.6L786.2 439.2L789.7 439.2L790.5 437.0L790.5 434.5L789.2 432.6L786.2 431.1L786.0 429.8L788.8 429.6L790.0 429.4L789.7 427.4L790.5 428.0L792.3 427.8L793.9 426.6L794.0 425.0L796.5 424.0L797.5 422.8L798.1 420.7L801.0 419.6L802.9 419.2L803.1 416.8L802.5 415.2L802.5 411.7L804.2 411.3L805.6 410.1L805.3 413.4L805.9 413.4L804.8 415.9L804.3 416.8L806.1 417.6L806.1 418.5L808.0 417.6L810.2 418.7L813.1 417.4L815.7 416.8L817.3 417.6L818.9 416.5L818.9 412.2L820.1 410.3L822.1 411.7L823.1 409.8L822.1 406.9L827.8 405.7L830.4 404.6L828.5 403.1L825.3 403.4L821.4 404.6L819.5 403.1L819.2 399.1L820.1 395.8L824.0 390.5L824.4 389.0L820.5 388.0L819.2 392.0L815.0 397.7L814.0 401.8L816.0 404.4L813.7 407.9L813.1 411.7L812.5 413.6L810.3 415.2L808.6 415.4L808.2 413.6L807.0 409.4L806.1 406.9L805.4 405.7L803.5 408.1L801.2 409.4L799.0 407.4L798.4 401.8L798.7 399.1L801.0 396.3L804.8 393.5L808.0 387.4L810.5 380.9L813.7 377.4L817.6 373.7L821.4 370.7L825.3 369.9L828.5 369.9L831.6 372.6L829.1 374.8L832.9 374.5L836.8 376.7L843.2 381.5L844.4 385.2L841.2 387.4L836.8 385.8L834.2 385.8L836.1 390.5L836.8 392.6L840.0 393.5L840.6 391.1L843.2 391.4L843.8 387.4L848.3 386.5L848.5 381.5L847.4 379.1L850.8 380.9L851.5 384.9L853.4 382.2L859.8 379.1L861.1 380.2L866.2 378.1L869.4 374.5L874.5 376.7L877.7 378.1L879.6 371.8L877.7 367.9L879.6 361.6L883.4 362.5L885.1 367.9L884.1 375.6L886.0 380.9L884.1 385.8L886.6 384.2L887.9 377.4L886.4 369.1L888.6 365.9L891.8 365.9L895.0 363.8L895.6 359.4L902.6 358.0L903.3 352.3L908.4 348.8L913.5 347.2L918.6 345.6L925.4 337.6L928.2 340.6L929.5 344.5L935.2 344.5L937.2 349.8L932.7 357.1L935.9 358.0L942.9 359.4L949.3 360.7L954.4 363.8L957.6 369.9L960.2 370.7L962.1 367.9L967.2 367.9L971.1 363.8L972.3 362.9L978.7 364.6L983.9 367.9L987.7 370.3L995.4 371.1L996.6 374.8L1001.8 374.8L1006.9 374.1L1010.1 377.4L1010.7 373.7L1017.1 374.8L1022.2 377.4L1022.2 389.6L1020.3 391.7L1019.0 391.4L1021.3 396.3L1018.4 397.7L1013.9 399.9L1010.1 404.4L1004.3 404.4L1000.9 409.4L999.2 413.4L1000.2 416.8L996.6 420.2L994.3 423.2L992.4 424.8L991.3 418.5L991.0 412.2L994.1 408.6L996.6 404.6L1000.5 400.2L1001.5 397.7L997.3 399.7L996.0 399.9L992.4 400.5L989.3 405.7L985.8 406.4L982.6 405.7L974.9 406.2L971.7 409.4L967.9 414.1L964.9 417.0L967.5 418.5L968.2 419.4L971.7 420.2L972.9 422.4L971.7 425.8L971.4 430.2L968.8 433.9L965.9 437.6L962.5 440.2L960.6 439.5L959.2 441.1L957.9 442.5L957.9 443.6L955.1 445.3L956.2 447.3L957.5 449.9L957.2 452.6L955.1 453.5L953.7 453.8L953.8 450.4L953.3 448.8L951.5 448.3L952.4 445.8L951.0 445.0L948.3 444.2L947.0 443.5L947.7 446.3L948.3 446.7L946.8 446.8L944.2 446.3L942.5 447.5L944.1 449.3L946.4 448.6L948.7 449.4L946.8 450.5L944.6 453.1L945.9 454.9L947.8 458.0L948.0 460.6L947.4 463.3L945.2 467.2L942.9 468.6L941.0 470.7L937.8 471.6L934.0 472.9L932.4 474.1L932.1 472.7L930.1 472.7L928.5 474.5L927.2 476.4L929.5 479.5L931.4 482.8L931.8 485.7L928.9 487.5L926.6 489.6L926.0 487.8L923.5 485.7L921.2 484.4L920.3 483.5L919.9 485.4L919.0 487.4L920.2 490.0L921.8 492.2L924.2 495.4L925.3 499.1L924.2 499.1L921.6 497.2L920.4 493.9L919.6 492.2L917.7 490.4L918.1 487.4L918.0 484.1L917.0 481.5L916.7 479.4L914.0 480.4L912.6 480.2L912.9 476.8L911.6 475.1L910.1 473.4L909.4 471.5L907.5 472.0L905.4 472.5L903.3 473.0L902.6 474.8L900.7 475.7L897.3 479.4L894.6 480.8L894.6 483.7L894.1 487.7L893.0 489.0L891.9 490.1L891.1 490.5L889.6 488.3L887.9 484.8L886.6 481.5L885.4 478.2L885.1 475.5L885.0 473.1L882.8 473.7L880.5 471.6L881.9 470.8L879.6 470.0L878.1 468.3L877.1 467.3L872.6 467.6L869.4 467.4L865.9 467.0L864.6 465.0L861.7 465.6L859.1 464.3L857.0 462.1L856.0 460.4L854.4 460.5L853.4 461.4L854.4 463.6L856.0 465.6L856.2 467.0L857.2 468.4L858.0 466.7L857.9 468.8L861.1 469.1L863.6 466.4L864.1 468.1L866.9 469.8L868.5 471.5L866.8 474.2L865.8 476.1L864.0 477.6L862.3 478.8L858.8 480.2L854.7 482.3L849.6 484.4L847.6 484.5L846.6 481.8L846.6 479.8L844.4 476.3L842.1 473.4L841.9 471.4L839.7 467.9L837.0 463.6L836.6 461.4L835.7 458.7L836.8 456.4L837.5 454.1L837.9 451.6L838.3 450.4L836.3 450.2L833.6 451.3L831.1 450.2L829.1 450.7L827.0 450.1L825.6 447.6L826.3 445.8L825.5 444.7L829.1 443.3L832.3 443.0L834.8 441.6L837.0 441.6L838.7 442.8L841.2 443.3L843.8 443.3L845.1 442.3L844.4 440.2L842.5 438.6L840.0 436.7L840.9 433.9L842.3 432.3L840.0 433.0L837.4 433.6L836.8 434.9L838.7 435.9L837.3 437.0L835.0 437.4L833.7 435.6L834.8 434.5L832.7 433.4L831.3 433.6L830.0 435.8L828.6 438.5L827.2 440.7L827.8 442.1L829.0 443.1L827.2 443.6L825.3 443.8L823.0 443.8L822.7 445.0L821.2 444.3L821.7 446.3L822.7 448.0L821.7 448.4L821.4 450.7L819.9 450.2L819.1 448.6L818.9 446.8L817.3 445.0L816.8 442.5L815.7 440.7L813.7 439.5L811.4 437.7L810.5 435.9L809.5 435.9L809.5 435.0L807.9 435.6L807.9 437.7L809.5 439.3L810.9 441.4L812.7 441.9L812.5 442.6L815.5 444.5L815.4 445.3L813.7 444.2L813.1 445.5L813.9 446.7L813.1 447.8L812.1 448.3L812.5 446.7L811.8 444.8L810.2 443.6L808.4 442.8L806.3 440.9L805.2 439.3L804.5 437.9L803.1 437.4L801.6 438.5L799.9 439.7L797.9 439.2L796.0 439.5L796.1 440.9L796.1 441.9L793.0 443.6L791.6 445.8L792.1 447.0L791.1 448.8L789.4 450.2L786.4 450.4L785.1 451.3L783.9 450.5L783.0 449.6L780.6 449.9ZM784.3 422.4L784.1 419.6L784.6 416.8L782.4 415.6L781.1 417.4L779.2 418.1L779.8 420.7L778.8 422.8L779.8 423.8L782.4 422.8ZM761.3 389.0L763.9 386.2L769.0 386.8L772.8 386.8L774.6 390.5L772.8 392.6L768.3 395.2L765.1 394.1L763.2 392.9L763.9 390.5ZM857.9 367.9L860.4 370.7L865.5 371.4L863.0 365.0L864.3 358.0L869.4 350.8L876.4 345.6L880.3 342.3L875.1 341.7L867.5 347.2L862.3 354.7L859.8 361.6L858.5 365.9ZM913.5 329.4L919.9 335.8L926.3 332.7L925.0 322.4L917.3 314.6L912.2 320.1ZM967.2 352.3L973.6 359.4L983.9 353.3L977.5 347.2L969.8 347.2ZM973.6 417.9L975.3 422.8L975.2 428.8L975.5 433.6L973.6 434.5L973.6 428.8L973.4 423.2ZM946.8 467.6L948.0 468.1L946.8 472.0L945.7 470.7ZM931.0 475.7L933.3 474.8L934.0 475.5L932.7 477.1L931.0 476.8ZM894.3 488.3L896.6 491.3L895.6 493.2L894.3 493.0L893.9 490.6ZM946.1 476.8L948.3 477.0L948.0 480.2L950.0 483.1L950.6 484.7L947.8 483.1L946.2 482.2L945.5 480.2ZM948.0 491.3L950.0 489.9L952.5 488.4L953.8 491.3L952.5 493.2L950.6 492.6ZM931.4 499.0L934.0 498.9L936.5 496.8L939.7 494.5L941.6 491.9L944.2 494.1L942.7 496.4L942.9 499.6L941.0 502.8L940.4 505.8L937.8 505.4L934.6 504.7L932.7 502.8L931.4 500.9ZM913.9 493.7L916.7 494.2L920.5 497.7L924.4 500.9L927.6 504.7L927.3 508.3L925.0 507.6L921.8 504.5L918.6 500.3L916.1 497.1ZM926.9 509.6L930.1 509.2L934.0 509.4L938.4 510.6L938.2 511.9L932.7 511.2L928.2 510.3ZM944.8 507.9L944.8 504.7L945.2 500.3L946.8 499.4L951.6 499.0L949.3 500.3L946.8 500.5L947.4 503.2L949.7 502.2L948.0 504.5L949.3 506.7L947.4 506.7L946.8 504.4L946.1 507.9ZM959.5 501.9L963.4 501.9L964.7 505.1L968.2 502.8L972.3 504.2L976.8 505.8L978.7 507.9L981.0 509.2L980.0 509.9L981.5 512.5L984.5 514.1L981.0 513.8L978.1 511.2L975.5 511.8L973.6 512.7L970.4 511.2L968.5 511.6L969.1 509.2L965.3 506.7L962.1 506.0L960.8 504.5ZM1012.9 548.0L1015.2 551.1L1016.5 551.9L1017.7 553.2L1020.3 553.0L1018.6 556.0L1017.1 558.5L1015.8 559.3L1015.6 556.5L1014.3 555.5L1015.4 553.5L1014.5 550.8ZM1012.9 557.6L1014.8 558.8L1013.3 561.9L1011.3 564.1L1010.5 567.3L1008.2 568.4L1005.0 567.1L1007.5 563.7L1010.1 561.6L1011.3 559.7ZM561.8 389.6L561.8 377.4L565.6 379.8L568.8 384.2L573.3 385.8L574.6 387.4L571.4 392.0L567.5 392.0L564.3 389.0ZM803.1 440.0L804.2 440.2L803.9 442.5L803.1 441.9Z"/>
<path fill="#fff" d="M852.1 435.4L855.3 433.6L857.9 433.0L859.8 433.6L859.1 435.8L857.5 437.2L856.3 437.6L857.9 439.5L859.5 440.7L859.1 443.0L860.8 443.6L860.8 446.7L860.8 449.9L858.5 450.4L856.0 449.3L854.7 447.8L855.1 444.5L853.6 441.9L852.8 439.9L852.1 437.2Z"/>
<path fill="none" stroke="#fff" stroke-width="1.25" d="M827.2 373.7L829.1 385.8L830.4 397.7L827.8 403.1L827.8 411.7L822.7 418.5L822.1 423.8L820.8 429.8L829.1 435.6M822.1 423.8L831.6 422.8L835.5 424.8L840.6 426.8L843.2 427.8L840.9 432.4M810.2 418.7L810.9 424.8L816.3 427.8L820.8 428.8L822.7 425.8M810.9 424.8L808.0 426.2L809.7 429.2L813.7 430.4L820.8 429.8M808.6 431.5L813.1 433.6L816.3 434.5L820.8 431.1M816.3 434.5L818.9 437.2L820.8 438.1L820.8 442.8L825.3 442.5L827.8 441.6M820.8 438.1L828.6 438.5M820.8 442.8L817.6 445.0M852.8 439.9L851.5 430.7L854.7 425.8L862.3 424.8L870.0 424.8L871.3 418.5L880.3 415.6L882.8 418.1L889.2 418.5L894.3 424.8L898.2 424.8L903.7 428.4M903.7 428.4L900.7 432.6L897.5 435.8L894.6 440.7L886.6 444.7L886.0 446.0M860.8 441.6L863.6 442.8L866.8 440.7L870.0 443.0L876.4 441.8L879.0 443.3L882.8 441.1L886.6 444.7M860.8 449.4L866.2 448.8L870.3 452.1L874.5 451.0L878.3 449.4L882.8 447.6L886.0 446.0L887.9 449.9L891.8 452.3L893.0 456.9L895.6 460.4M870.3 452.1L869.8 458.4L871.0 461.4L873.0 465.3L870.8 467.6M869.8 458.4L876.4 460.9L880.9 458.0L882.8 454.6L882.8 447.6M882.8 454.6L886.6 456.1L887.3 459.2L882.8 463.6L881.5 467.2L879.2 469.5M895.6 460.4L899.4 462.4L904.6 463.9L909.7 463.9L916.1 463.1L916.7 469.3L919.3 472.0L921.8 473.1L922.8 471.4L926.9 470.7L930.1 472.7M904.6 466.0L905.2 472.0L905.8 466.2L910.1 467.7L910.1 473.1M916.7 469.3L912.2 469.3L910.1 473.1M903.7 428.4L909.7 425.2L917.3 426.2L918.0 422.8L923.1 425.8L928.9 426.8L936.5 426.8L941.3 427.2L945.5 432.6L940.4 434.1L935.2 436.7L934.0 439.0L926.3 441.9L916.1 440.2L908.4 435.9L903.7 428.4M945.5 432.6L946.8 420.0L953.2 421.1L958.9 429.2L964.7 430.0L962.5 436.3L959.5 436.7L959.5 440.2M951.0 445.0L956.1 442.3L959.2 441.1M921.8 473.1L919.9 474.4L917.3 476.8L918.4 480.8L918.1 486.1M922.8 471.4L925.0 476.1L927.2 476.4M920.3 483.5L923.1 482.5L926.3 482.4L929.5 481.5L929.5 484.8L927.6 486.7L926.0 487.8M923.1 482.5L921.8 477.8L925.0 476.1M825.3 443.8L825.9 441.9L827.8 441.6M838.3 450.4L841.9 450.4L846.1 449.6L849.3 449.6L848.3 446.0L849.3 445.5L847.6 443.0L845.1 442.3M849.3 449.6L850.8 453.1L850.2 454.8L853.1 460.6L853.4 461.4M846.1 449.6L844.4 454.0L841.6 455.5L838.0 456.9L837.5 454.1M841.6 455.5L842.1 457.4L845.7 459.2L849.2 461.8L853.0 462.7M836.8 461.5L839.3 461.8L840.6 459.9L839.3 458.4L842.1 457.4M847.3 479.2L851.5 478.6L853.6 477.2L858.5 476.1L858.8 480.2M858.5 476.1L862.3 474.8L863.1 472.0L859.3 470.8L858.0 468.8M863.1 472.0L863.6 468.1M847.6 443.0L851.5 441.9L854.0 441.9M842.5 438.6L848.3 440.6L852.8 439.9M780.9 464.0L775.4 464.0M780.9 464.0L780.9 451.5M780.9 464.0L785.9 467.9L793.5 473.3L795.8 476.1L797.4 476.0L797.4 479.6L796.5 481.0L793.3 481.5L791.4 481.5L788.2 483.2L785.0 487.4M770.3 473.4L775.4 473.0L775.4 470.0L776.7 466.4L780.9 466.4L780.9 464.0M785.9 467.9L783.7 467.9L785.0 479.5L785.2 480.8L777.3 480.8L776.4 481.8L773.5 479.4L770.9 480.2M776.4 481.8L777.4 484.9L774.5 484.7L770.6 484.9M777.4 484.9L781.5 486.7L781.8 487.8L782.2 490.1L781.1 491.2L782.4 495.3M781.5 486.7L785.0 487.4L788.4 488.7L788.2 494.4M788.4 488.7L788.4 486.7L792.0 486.6L793.3 486.7L794.0 493.0M793.3 486.7L795.1 485.2L796.6 485.8L795.6 489.3L795.5 492.8M796.6 485.8L797.4 483.5L801.0 484.1L804.8 483.7L809.3 483.2L810.2 484.9L810.5 486.7L809.0 488.7L806.7 492.4L803.0 494.8M796.5 481.0L797.4 483.5M797.4 476.0L799.7 475.1L807.3 470.0L811.2 470.7L812.5 474.1L811.8 479.1L809.3 483.2M807.3 470.0L804.2 466.0L804.2 460.4L801.6 454.9L803.0 450.1M804.2 460.4L806.7 456.0M811.2 470.7L822.7 475.5L822.7 474.8L824.0 474.8L824.0 458.3M824.0 472.0L839.1 472.0M822.7 475.5L822.6 480.6L820.8 482.8L820.5 486.7L822.2 489.6L827.0 494.5L831.4 496.4L835.5 495.5L838.0 495.3L837.1 494.0L835.4 490.1L835.5 488.7L838.6 482.3L841.4 477.5M838.6 482.3L840.5 481.6L843.2 482.2L846.2 484.8M838.0 495.3L841.9 496.4L845.6 495.9L849.6 494.5L853.4 490.6L848.3 489.3L847.0 486.2M845.6 495.9L844.4 500.9L845.2 503.1M835.5 495.5L836.8 498.7L835.5 502.2L840.2 504.9L842.1 506.9M835.5 502.2L831.0 502.2L829.9 502.7L829.3 506.5L831.4 511.4L828.3 512.5L828.6 516.8L830.1 518.2L826.8 516.1L822.7 515.1L822.6 517.5L820.1 517.7L820.1 521.9L821.8 523.6L824.2 524.0L829.0 521.5L830.9 521.1L834.2 519.0L836.1 515.1L835.5 513.2L831.4 511.4M836.1 515.1L840.0 516.0L843.8 514.4M830.9 521.1L834.1 522.6L834.0 526.3L832.0 530.3L832.8 535.2L834.0 536.6M824.2 524.0L826.5 527.7L829.6 530.0L832.0 530.3M829.6 530.0L826.4 532.5L824.6 534.9L821.4 534.4L818.6 536.5L817.6 533.7L817.6 529.8L818.9 529.8L818.9 524.7L821.8 523.6M817.6 533.7L817.6 538.8L813.7 538.4L813.1 539.1M807.1 523.4L809.9 523.5L815.7 523.5L818.9 524.7M820.1 517.7L820.1 515.1L822.7 515.1M807.6 508.5L813.1 508.5L814.6 511.2L820.1 510.5L820.1 515.1M807.6 508.5L808.6 506.8L810.5 507.2L812.7 503.7L814.6 501.7L815.8 496.4L820.8 495.7L824.4 494.2L827.0 494.5M804.5 498.0L809.0 498.1L812.7 498.7L814.6 501.7M806.3 505.9L810.5 507.2M806.5 498.1L804.5 499.6M809.0 498.1L812.5 495.8L810.5 493.2L811.8 491.3L809.0 488.7M811.8 491.3L815.8 496.4M811.8 491.3L816.3 489.3L820.5 486.7M831.4 496.4L830.4 499.0L829.9 502.7M693.0 491.3L696.1 493.2M699.9 486.1L699.3 489.3L702.5 491.9L705.7 493.0L705.9 498.1L702.7 499.5M693.3 496.0L691.2 499.4L695.7 501.0L695.3 503.5L698.6 503.8L702.5 506.4M689.3 505.3L691.0 507.3L692.2 505.3L695.3 503.5M702.0 524.7L703.1 523.6L703.7 521.6L703.1 520.3L704.0 517.0L703.1 515.1L701.8 515.1M703.1 523.6L704.4 527.0L705.0 531.1L706.3 531.1L707.2 529.5L709.5 530.2L711.8 530.0L712.7 527.7L716.5 526.1L717.8 527.0M705.0 531.1L704.4 536.8L702.5 541.2L702.1 545.7L702.5 550.3L700.9 555.1L700.2 561.9L700.6 567.3L699.3 575.0L699.9 579.0L704.5 579.9M711.8 530.0L717.2 533.7L718.3 534.6L717.2 537.1L720.6 538.5M718.3 541.4L717.4 546.4M715.3 490.0L713.7 493.2L715.0 494.2M719.1 493.2L717.8 495.8L719.7 498.5M722.9 493.6L722.3 496.4L722.9 498.0M725.9 495.8L724.7 498.0M674.1 482.2L675.0 480.2L676.3 480.0L675.6 477.8L677.9 477.6L679.1 476.8M677.9 477.6L677.9 480.3L679.1 480.6M677.9 482.3L679.8 483.6L683.3 481.6L685.6 481.5M682.4 486.6L684.9 486.9M685.8 490.2L686.4 488.6"/>
<path fill="#c5e8f9" d="M611.7 375.2L618.1 377.7L621.9 375.6L627.0 373.7L632.1 375.6L637.2 374.5L642.4 377.7L646.2 380.9L651.3 381.2L653.9 379.1L657.7 379.8L661.5 381.5L666.7 379.1L669.2 380.9L669.9 375.6L671.1 366.7L673.7 371.8L675.6 375.6L679.4 379.1L682.0 382.6L683.3 377.4L687.1 375.6L687.8 380.9L685.8 385.8L682.0 387.4L680.7 390.5L676.9 393.5L673.1 399.1L671.1 404.4L671.8 407.4L673.7 411.7L676.9 411.7L680.7 414.1L683.3 415.6L686.7 416.1L687.1 420.7L688.4 422.8L690.3 424.2L691.0 421.7L691.6 417.4L693.5 414.1L694.2 410.6L691.6 407.4L692.9 404.4L692.2 398.3L697.4 398.6L701.2 401.8L703.1 406.9L705.7 408.6L708.2 404.9L709.5 403.6L712.7 410.6L714.0 414.1L717.8 416.8L720.4 420.7L720.6 423.2L717.2 424.2L715.3 426.4L710.1 426.2L706.9 426.4L704.4 428.8L701.2 432.8L703.1 431.1L706.9 428.6L709.5 428.8L709.5 431.1L708.9 432.6L709.5 434.1L713.3 434.9L715.3 433.0L714.0 435.9L710.8 437.0L708.0 439.0L707.3 437.2L709.5 435.4L706.3 436.1L705.3 432.4L703.5 431.9L701.4 435.8L696.3 436.3L694.2 438.1L691.0 439.2L691.0 440.2L686.5 441.9L685.8 441.3L686.6 439.9L686.5 435.8L684.6 433.9L678.8 430.4L677.5 430.7L670.5 428.8L634.4 428.8L632.4 426.8L628.9 424.8L628.3 421.7L625.5 417.4L625.7 416.3L625.7 414.1L623.2 410.6L621.3 407.4L619.3 405.7L616.1 406.4L614.2 404.1L611.7 403.6ZM689.0 393.5L685.8 396.9L680.7 394.3L682.0 389.0L684.6 388.0ZM716.2 431.3L720.4 433.0L724.2 433.2L724.5 429.8L721.0 427.2L720.4 423.8L718.5 426.8L716.5 429.8ZM634.0 430.0L631.5 429.2L627.9 425.4L630.8 425.8L633.4 428.2ZM806.1 326.0L809.9 335.8L810.5 341.7L813.7 343.4L816.3 335.8L819.5 332.7L820.1 326.0L826.5 322.4L822.7 319.4L815.0 320.9L809.9 323.1ZM799.0 407.4L798.4 401.8L798.7 399.1L801.0 396.3L804.8 393.5L808.0 387.4L810.5 380.9L813.7 377.4L817.6 373.7L821.4 370.7L825.3 369.9L828.5 369.9L831.6 372.6L829.1 374.8L828.5 376.7L825.3 374.1L823.3 378.4L818.9 376.7L817.6 379.1L815.0 379.1L813.1 382.6L811.2 386.8L809.9 392.0L807.6 394.9L807.6 400.5L808.1 403.9L806.7 406.9L806.1 406.9L805.4 405.7L803.5 408.1L801.2 409.4ZM818.9 376.7L823.3 378.4L825.3 374.1L828.5 376.7L829.1 374.8L828.8 379.1L830.4 382.6L829.3 385.8L830.6 390.5L830.1 394.1L832.3 396.9L830.4 400.5L828.5 403.1L825.3 403.4L821.4 404.6L819.5 403.1L819.2 399.1L820.1 395.8L824.0 390.5L824.4 389.0L822.7 387.4L822.1 381.2ZM803.1 416.8L802.5 415.2L802.5 411.7L804.2 411.3L805.6 410.1L805.3 413.4L805.9 413.4L804.8 415.9L804.3 416.8ZM806.1 414.7L808.0 413.8L808.1 415.9L807.1 416.8L806.1 415.9ZM795.3 424.6L796.5 424.0L797.5 423.8L799.4 424.6L799.8 425.2L800.2 427.8L799.4 427.8L797.4 426.8ZM780.7 441.8L780.1 439.9L781.8 438.6L786.2 439.2L789.7 439.2L792.0 440.4L793.9 440.7L796.1 440.9L796.1 441.9L793.0 443.6L791.6 445.8L792.1 447.0L791.1 448.8L789.4 450.2L786.4 450.4L785.1 451.3L783.9 450.5L783.0 449.6L782.5 449.6L783.0 448.0L782.8 445.7L783.2 443.3L784.1 442.3L783.4 441.7ZM801.6 438.5L800.7 436.5L801.0 434.7L802.9 433.9L805.4 433.0L807.6 432.6L809.5 433.6L809.5 435.0L807.9 435.6L807.9 437.7L809.5 439.3L810.9 441.4L812.7 441.9L812.5 442.6L815.5 444.5L815.4 445.3L813.7 444.2L813.1 445.5L813.9 446.7L813.1 447.8L812.1 448.3L812.5 446.7L811.8 444.8L810.2 443.6L808.4 442.8L806.3 440.9L805.2 439.3L804.5 437.9L803.1 437.4ZM808.0 448.3L811.8 448.0L811.3 450.4L808.2 449.1ZM802.6 443.3L804.3 443.3L804.3 446.3L802.9 446.7ZM686.5 295.0L695.3 292.8L705.3 293.8L711.6 297.5L710.9 301.9L706.5 306.3L702.8 313.8L700.3 321.4L694.0 326.4L692.7 333.9L689.0 342.7L678.9 343.9L677.7 341.4L682.7 335.2L680.2 331.4L684.0 325.1L681.5 321.4L686.5 317.0L678.9 316.4L675.8 310.1L675.2 305.7L681.5 302.6L682.7 298.8ZM671.4 312.0L673.9 313.8L677.7 320.1L678.9 326.4L676.4 332.7L673.3 332.7L670.2 325.1L668.7 318.9L669.5 313.8ZM668.3 341.4L672.7 343.3L675.2 347.7L678.9 349.6L687.7 349.0L688.7 352.1L685.2 354.0L676.4 353.4L672.7 350.2L670.8 345.2ZM657.0 327.6L660.1 328.9L663.3 334.5L659.5 332.7ZM665.8 330.2L668.3 332.0L668.3 335.2L666.4 333.9ZM635.7 345.2L638.8 339.2L642.3 339.2L640.1 343.3L636.9 346.5ZM641.9 350.2L643.8 345.2L648.2 346.5L650.1 349.6L652.0 343.9L655.7 349.6L653.2 351.5L647.0 354.0L650.1 350.8L645.1 350.8ZM661.4 345.2L665.2 343.9L665.8 350.2L663.3 351.5L662.0 347.7ZM668.3 350.2L670.2 350.0L670.8 352.7L668.9 352.7ZM633.2 355.9L640.7 356.5L642.6 359.0L638.8 362.8L636.3 368.4L631.3 365.9L632.5 360.3ZM640.1 365.3L643.2 361.5L650.1 362.8L653.2 360.3L656.4 366.5L657.6 371.5L661.4 373.4L657.6 376.6L650.1 377.8L643.2 373.4L647.0 371.5L641.3 369.0ZM662.0 359.0L666.4 359.0L667.0 366.5L664.5 367.8L661.4 363.4ZM669.5 357.1L674.6 357.1L672.7 361.5L670.2 365.3L668.9 361.5ZM668.9 367.8L671.4 367.2L673.3 372.8L672.7 377.8L669.5 375.3ZM677.1 362.1L679.6 359.0L682.7 362.8L685.2 359.0L688.4 362.8L692.7 364.0L696.5 368.4L702.8 371.5L705.3 375.3L704.0 379.1L711.6 385.3L709.7 389.1L706.5 386.6L707.8 391.6L705.3 396.6L700.3 395.4L699.0 389.1L695.3 381.6L690.2 375.3L684.0 372.8L678.3 371.5L677.1 366.5Z"/>
<path fill="#76a3fa" d="M611.7 375.2L606.5 373.7L597.6 370.7L591.8 368.7L586.1 372.6L579.7 379.1L582.9 384.2L585.4 386.5L582.2 385.8L577.1 388.7L581.6 392.0L586.1 392.0L586.1 394.9L581.6 396.3L579.7 400.5L581.6 403.6L584.8 404.9L584.8 407.9L589.3 407.4L591.2 407.7L590.6 410.6L587.4 414.1L583.5 416.3L581.2 417.4L584.8 415.4L589.3 412.7L593.8 409.4L595.7 406.2L598.2 406.2L598.2 402.3L601.4 402.3L602.7 404.4L605.3 402.6L607.8 404.4L611.0 404.4L613.6 405.7L616.1 408.1L618.1 409.4L620.6 412.9L623.2 415.6L625.7 416.3L625.7 414.1L623.2 410.6L621.3 407.4L619.3 405.7L616.1 406.4L614.2 404.1L611.7 403.6ZM634.4 428.8L670.5 428.8L677.5 430.7L678.8 430.4L684.6 433.9L686.5 435.8L686.6 439.9L685.8 441.3L686.5 441.9L691.0 440.2L691.0 439.2L694.2 438.1L696.3 436.3L701.4 435.8L703.5 431.9L705.3 432.4L706.3 436.1L706.3 437.0L702.5 438.5L701.4 440.7L702.5 442.1L699.9 443.0L697.4 444.0L697.1 445.7L695.4 447.5L694.8 449.9L695.2 452.1L693.5 453.8L691.0 455.4L688.4 457.7L688.0 459.9L689.3 463.6L689.6 466.4L688.7 467.6L687.4 466.4L686.2 463.9L686.1 461.8L684.6 460.6L682.6 460.9L680.7 460.1L678.2 460.2L677.5 461.8L675.6 461.7L672.0 461.1L670.5 461.8L667.9 463.9L667.6 466.4L665.1 465.6L663.1 462.1L660.9 460.9L660.0 462.1L658.0 460.4L655.8 458.0L653.6 458.0L653.6 458.7L650.0 458.7L645.2 456.9L642.2 456.9L640.4 454.6L637.8 453.8L636.0 450.2L634.7 447.8L633.0 444.5L633.1 441.6L633.4 437.2L633.4 433.9L632.5 430.2L634.7 430.4L635.3 431.7L634.9 428.8Z"/>
<path fill="#a9d4f9" d="M726.8 495.8L728.0 498.6L728.0 500.9L730.0 502.6L733.2 502.2L735.7 504.1L738.9 504.6L742.1 505.8L744.7 507.2L747.0 507.9L747.5 510.5L746.9 513.1L744.7 515.7L742.8 517.7L742.1 521.0L741.9 524.0L740.8 527.0L739.6 529.8L737.0 531.1L734.4 532.3L731.9 533.4L730.0 535.1L729.8 538.2L728.0 541.2L726.1 543.8L723.7 546.7L724.0 545.2L721.0 542.3L718.3 541.4L720.6 538.5L723.2 536.8L722.2 534.6L722.6 532.5L721.0 532.5L720.8 530.2L717.8 529.8L717.8 527.0L718.2 524.3L717.2 522.0L715.0 522.0L714.6 518.7L712.7 518.1L709.5 517.0L708.5 514.8L708.4 513.4L705.0 515.1L701.8 515.1L701.8 513.1L698.9 513.2L697.5 510.4L698.6 507.9L699.7 506.9L702.5 506.4L703.1 502.4L702.7 499.5L706.3 498.6L708.9 499.9L710.8 498.1L709.5 495.8L713.3 495.4L715.0 494.2L715.5 495.1L716.5 499.1L719.1 498.3L721.7 497.7L722.9 498.0L724.7 498.0L725.9 495.8Z"/>
<path fill="#9cc6f7" d="M937.2 529.8L938.1 535.1L936.8 535.4L938.6 539.0L939.7 543.4L939.1 547.7L942.9 548.7L945.5 547.0L950.0 547.0L953.2 544.6L957.0 543.5L959.8 543.4L963.4 545.4L965.3 548.4L967.9 545.7L968.5 549.5L970.8 551.6L972.3 554.0L975.5 554.8L979.1 555.1L981.3 553.2L983.9 552.2L984.9 548.7L985.8 545.7L987.4 542.6L988.3 539.0L987.7 534.6L985.1 532.3L983.2 530.2L981.9 527.0L979.1 525.7L978.1 520.3L976.8 519.4L975.5 517.0L974.3 514.8L973.2 517.7L973.0 521.0L971.7 523.6L969.8 523.0L967.9 521.6L965.3 520.3L967.0 516.6L964.7 516.4L961.5 515.7L959.5 516.8L958.3 518.3L957.6 520.3L955.7 520.3L954.2 519.0L951.9 521.0L950.0 523.4L948.3 524.3L947.4 526.3L944.2 527.0L941.0 528.1L938.4 529.3ZM977.1 558.0L979.4 558.8L981.7 558.5L981.3 561.9L979.4 563.0L977.8 561.1Z"/>
<path fill="#5f90f4" d="M959.4 454.6L961.5 452.3L964.7 452.1L967.0 449.9L969.1 449.3L970.8 446.7L971.1 443.6L972.9 442.8L973.4 445.8L972.3 448.3L972.1 451.5L971.1 452.7L969.5 453.5L967.2 453.7L965.7 455.4L964.7 454.0L962.1 454.1L960.2 454.8ZM971.1 442.5L973.0 439.9L973.4 435.6L975.5 437.7L978.1 439.3L975.3 441.6L972.3 442.1ZM958.3 455.4L960.4 455.4L960.2 458.4L958.9 459.2L958.0 456.6ZM961.5 454.9L964.0 454.3L963.6 455.7L962.1 456.4Z"/>
<path fill="#8ab4f8" d="M806.7 406.9L808.1 403.9L807.6 400.5L807.6 394.9L809.9 392.0L811.2 386.8L813.1 382.6L815.0 379.1L817.6 379.1L818.9 376.7L822.1 381.2L822.7 387.4L820.5 388.0L819.2 392.0L815.0 397.7L814.0 401.8L816.0 404.4L813.7 407.9L813.1 411.7L812.5 413.6L810.3 415.2L808.6 415.4L808.2 413.6L807.0 409.4Z"/>
<path fill="#7ba7f6" d="M801.0 419.6L802.9 419.2L803.1 416.8L804.3 416.8L806.1 417.6L806.1 418.5L808.0 417.6L810.2 418.7L810.3 421.7L810.9 424.8L808.0 426.2L809.7 429.2L808.6 431.5L805.4 431.9L801.7 431.5L802.5 428.8L800.2 427.8L799.8 425.2L800.7 423.2L801.2 420.2Z"/>
<path fill="#8db6f8" d="M789.7 439.2L790.5 437.0L790.5 434.5L789.2 432.6L786.2 431.1L786.0 429.8L788.8 429.6L790.0 429.4L789.7 427.4L790.5 428.0L792.3 427.8L793.9 426.6L794.0 425.0L795.3 424.6L797.4 426.8L799.4 427.8L800.2 427.8L802.5 428.8L801.7 431.5L799.7 433.9L801.0 434.7L800.7 436.5L801.6 438.5L799.9 439.7L797.9 439.2L796.0 439.5L796.1 440.9L793.9 440.7L792.0 440.4ZM784.7 426.8L787.5 426.2L790.7 425.4L793.7 424.6L794.0 421.5L792.4 420.7L792.3 419.4L790.5 417.2L790.0 415.0L788.2 414.1L789.4 410.3L787.1 410.1L787.9 407.9L785.6 407.9L784.6 410.3L784.7 413.1L785.6 415.9L787.5 416.5L788.2 418.5L787.9 419.8L786.2 420.2L786.6 422.1L785.3 423.2L787.5 423.8L788.2 424.2L786.2 424.8ZM784.6 416.8L782.4 415.6L781.8 417.4L783.9 418.3Z"/>
</g></svg>
<!-- overlays -->
<svg style="left:0;top:0" width="1970" height="100" fill="none" stroke-linecap="round" stroke-linejoin="round">
<g stroke="#3a3a3a" stroke-width="1.9"><circle cx="524.3" cy="51.8" r="3.1"/><circle cx="524.3" cy="63.3" r="3.1"/><path d="M526.7 54.2L539.3 66.2M526.7 61L531 57M533.6 54.4L539.6 48.8"/></g>
<g stroke="#3a3a3a" stroke-width="1.9"><rect x="591.4" y="52" width="13.7" height="15" rx="2.3"/><path d="M591.2 63.3H589.6A2.3 2.3 0 0 1 587.3 61V50.2A2.3 2.3 0 0 1 589.6 47.9H598.7A2.3 2.3 0 0 1 601 50.2V51.8"/></g>
<g stroke="#9a9a9a" stroke-width="1.8"><path d="M658 49.6H656.6A2 2 0 0 0 654.6 51.6V65A2 2 0 0 0 656.6 67H668A2 2 0 0 0 670 65V51.6A2 2 0 0 0 668 49.6H666.6"/><rect x="658" y="47.4" width="8.6" height="4.2" rx="2"/></g>
<g stroke="#3a3a3a" stroke-width="1.9"><path d="M718.8 51.6H737.6M721 51.6V65A2.2 2.2 0 0 0 723.2 67.2H733.2A2.2 2.2 0 0 0 735.4 65V51.6M724 51.4V50A2.4 2.4 0 0 1 726.4 47.6H730A2.4 2.4 0 0 1 732.4 50V51.4"/><path d="M726.4 56V62.6M730 56V62.6" stroke-width="1.7"/></g>
<g stroke="#9a9a9a" stroke-width="1.9"><path d="M807.6 49.6L801.6 55.2L807.6 60.8M801.8 55.2H813.4A4.6 4.6 0 0 1 818 59.8V65.4"/><path d="M879.4 49.6L885.4 55.2L879.4 60.8M885.2 55.2H873A4.6 4.6 0 0 0 868.4 59.8V65.4"/></g>
<path d="M949.8 49.5H969.2L961.6 59.3V66.4L957.4 64.4V59.3Z" stroke="#3a3a3a" stroke-width="1.9"/>
<g stroke="#3a3a3a" stroke-width="1.9"><path d="M1015.4 58.6A9.5 9.5 0 0 1 1031.6 50.8"/><path d="M1034.2 56.8A9.5 9.5 0 0 1 1018 64.6"/><path d="M1029.4 51.5L1033.2 47.3L1033.6 52.6Z" fill="#3a3a3a" stroke-width="1.5"/><path d="M1020.2 63.9L1016.4 68.1L1016 62.8Z" fill="#3a3a3a" stroke-width="1.5"/></g>
</svg>
<div class="a" style="left:1888px;top:88px;width:52px;height:849px;background:#fcfcfc"></div>
<div class="a" style="left:1886px;top:88px;width:2px;height:849px;background:#c6c6c6"></div>
<div class="a" style="left:1888px;top:88px;width:52px;height:51px;background:#ebebeb"></div>
<div class="a" style="left:1888px;top:138px;width:52px;height:2px;background:#d0d0d0"></div>
<div class="a" style="left:1888px;top:191px;width:52px;height:2px;background:#d0d0d0"></div>
<svg style="left:1897.7px;top:97px" width="32" height="32" viewBox="0 0 32 32"><path d="M17.20 6.78L18.19 2.78L22.00 4.02L20.45 7.83L22.39 9.24L25.54 6.59L27.90 9.83L24.40 12.01L25.14 14.29L29.25 14.00L29.25 18.00L25.14 17.71L24.40 19.99L27.90 22.17L25.54 25.41L22.39 22.76L20.45 24.17L22.00 27.98L18.19 29.22L17.20 25.22L14.80 25.22L13.81 29.22L10.00 27.98L11.55 24.17L9.61 22.76L6.46 25.41L4.10 22.17L7.60 19.99L6.86 17.71L2.75 18.00L2.75 14.00L6.86 14.29L7.60 12.01L4.10 9.83L6.46 6.59L9.61 9.24L11.55 7.83L10.00 4.02L13.81 2.78L14.80 6.78Z" fill="none" stroke="#222" stroke-width="1.5" stroke-linejoin="round"/><circle cx="16" cy="16" r="5.1" fill="none" stroke="#222" stroke-width="1.5"/></svg>
<svg style="left:1901px;top:152px" width="26" height="28" viewBox="0 0 26 28" fill="none" stroke="#333" stroke-width="1.3"><ellipse cx="13" cy="5" rx="11" ry="3.6"/><path d="M2 5V22.5C2 24.5 6.9 26.1 13 26.1S24 24.5 24 22.5V5"/><path d="M2 10.8C2 12.8 6.9 14.4 13 14.4S24 12.8 24 10.8M2 16.6C2 18.6 6.9 20.2 13 20.2S24 18.6 24 16.6"/></svg>
<div class="a" style="left:1773px;top:140px;width:111px;height:50px;background:#fff;border:1px solid #d6d6d6;border-radius:5px;box-shadow:0 2px 6px rgba(0,0,0,.2);box-sizing:content-box"></div>
<span class="t" style="font-size:18.5px;line-height:21px;top:155px;color:#111;letter-spacing:-0.107px;left:1787.98px;">Properties</span>
<svg style="left:0;top:0" width="1970" height="957">
<rect x="1163" y="489.6" width="346.8" height="346.3" fill="none" stroke="#14a3e4" stroke-width="2"/>
<circle cx="1163.0" cy="489.6" r="4.2" fill="#14a3e4" stroke="#fff" stroke-width="1.6"/>
<circle cx="1335.5" cy="489.6" r="4.2" fill="#14a3e4" stroke="#fff" stroke-width="1.6"/>
<circle cx="1163.0" cy="662.6" r="4.2" fill="#14a3e4" stroke="#fff" stroke-width="1.6"/>
<circle cx="1509.8" cy="662.6" r="4.2" fill="#14a3e4" stroke="#fff" stroke-width="1.6"/>
<circle cx="1163.0" cy="835.9" r="4.2" fill="#14a3e4" stroke="#fff" stroke-width="1.6"/>
<circle cx="1335.5" cy="835.9" r="4.2" fill="#14a3e4" stroke="#fff" stroke-width="1.6"/>
<circle cx="1509.8" cy="835.9" r="4.2" fill="#14a3e4" stroke="#fff" stroke-width="1.6"/>
<circle cx="1510.7" cy="489.0" r="17.8" fill="#fff" stroke="#14a3e4" stroke-width="1.3"/>
<path d="M1511.86 480.07L1512.84 476.08L1516.57 477.29L1515.01 481.10L1516.88 482.46L1520.03 479.80L1522.33 482.97L1518.83 485.14L1519.55 487.34L1523.65 487.04L1523.65 490.96L1519.55 490.66L1518.83 492.86L1522.33 495.03L1520.03 498.20L1516.88 495.54L1515.01 496.90L1516.57 500.71L1512.84 501.92L1511.86 497.93L1509.54 497.93L1508.56 501.92L1504.83 500.71L1506.39 496.90L1504.52 495.54L1501.37 498.20L1499.07 495.03L1502.57 492.86L1501.85 490.66L1497.75 490.96L1497.75 487.04L1501.85 487.34L1502.57 485.14L1499.07 482.97L1501.37 479.80L1504.52 482.46L1506.39 481.10L1504.83 477.29L1508.56 476.08L1509.54 480.07Z" fill="none" stroke="#14a3e4" stroke-width="1.3" stroke-linejoin="round"/><circle cx="1510.7" cy="489.0" r="5" fill="none" stroke="#14a3e4" stroke-width="1.3"/>
<defs><linearGradient id="fade" x1="0" x2="1"><stop offset="0" stop-color="#e4e4e4" stop-opacity="0"/><stop offset=".3" stop-color="#dcdcdc"/><stop offset=".7" stop-color="#dcdcdc"/><stop offset="1" stop-color="#e4e4e4" stop-opacity="0"/></linearGradient></defs>
<rect x="1051" y="870.9" width="205.6" height="1.2" fill="url(#fade)"/><rect x="1051" y="874.8" width="205.6" height="1.2" fill="url(#fade)"/>
<circle cx="1154.1" cy="873.7" r="18.4" fill="#0663ff" stroke="#fff" stroke-width="1.6"/><path d="M1154.3 864.2V881.2M1145.7 872.7H1163.2" stroke="#fff" stroke-width="2.9"/>
<g transform="translate(1922.1 125.7) scale(1.3)"><path d="M8.2 1.2C9.5 1.2 10.4 2.1 10.4 3.4V11.2L11 9.6C11.6 8.9 13.3 9 13.6 10.2V11.6C14.3 10.6 16.2 10.8 16.5 12.1V13.3C17.3 12.5 19 12.8 19.3 14.2C19.7 17.3 19.6 20 18.3 23.2V25H8.6V23.4C6.6 21 4.3 18.4 2.1 15.8C1.2 14.6 2.6 13 4.1 13.9L6 15.6V3.4C6 2.1 6.9 1.2 8.2 1.2Z" fill="#fff" stroke="#111" stroke-width="1.05" stroke-linejoin="round"/><path d="M10.4 11.2V16M13.6 11.8V16M16.5 13.3V16.4" stroke="#111" stroke-width=".9" fill="none"/></g>
<rect x="1134" y="460" width="401" height="398.7" fill="none" stroke="#fe0000" stroke-width="6"/>
<rect x="1852.3" y="79" width="100.5" height="76.6" fill="none" stroke="#fe0000" stroke-width="6"/>
</svg></body></html>
